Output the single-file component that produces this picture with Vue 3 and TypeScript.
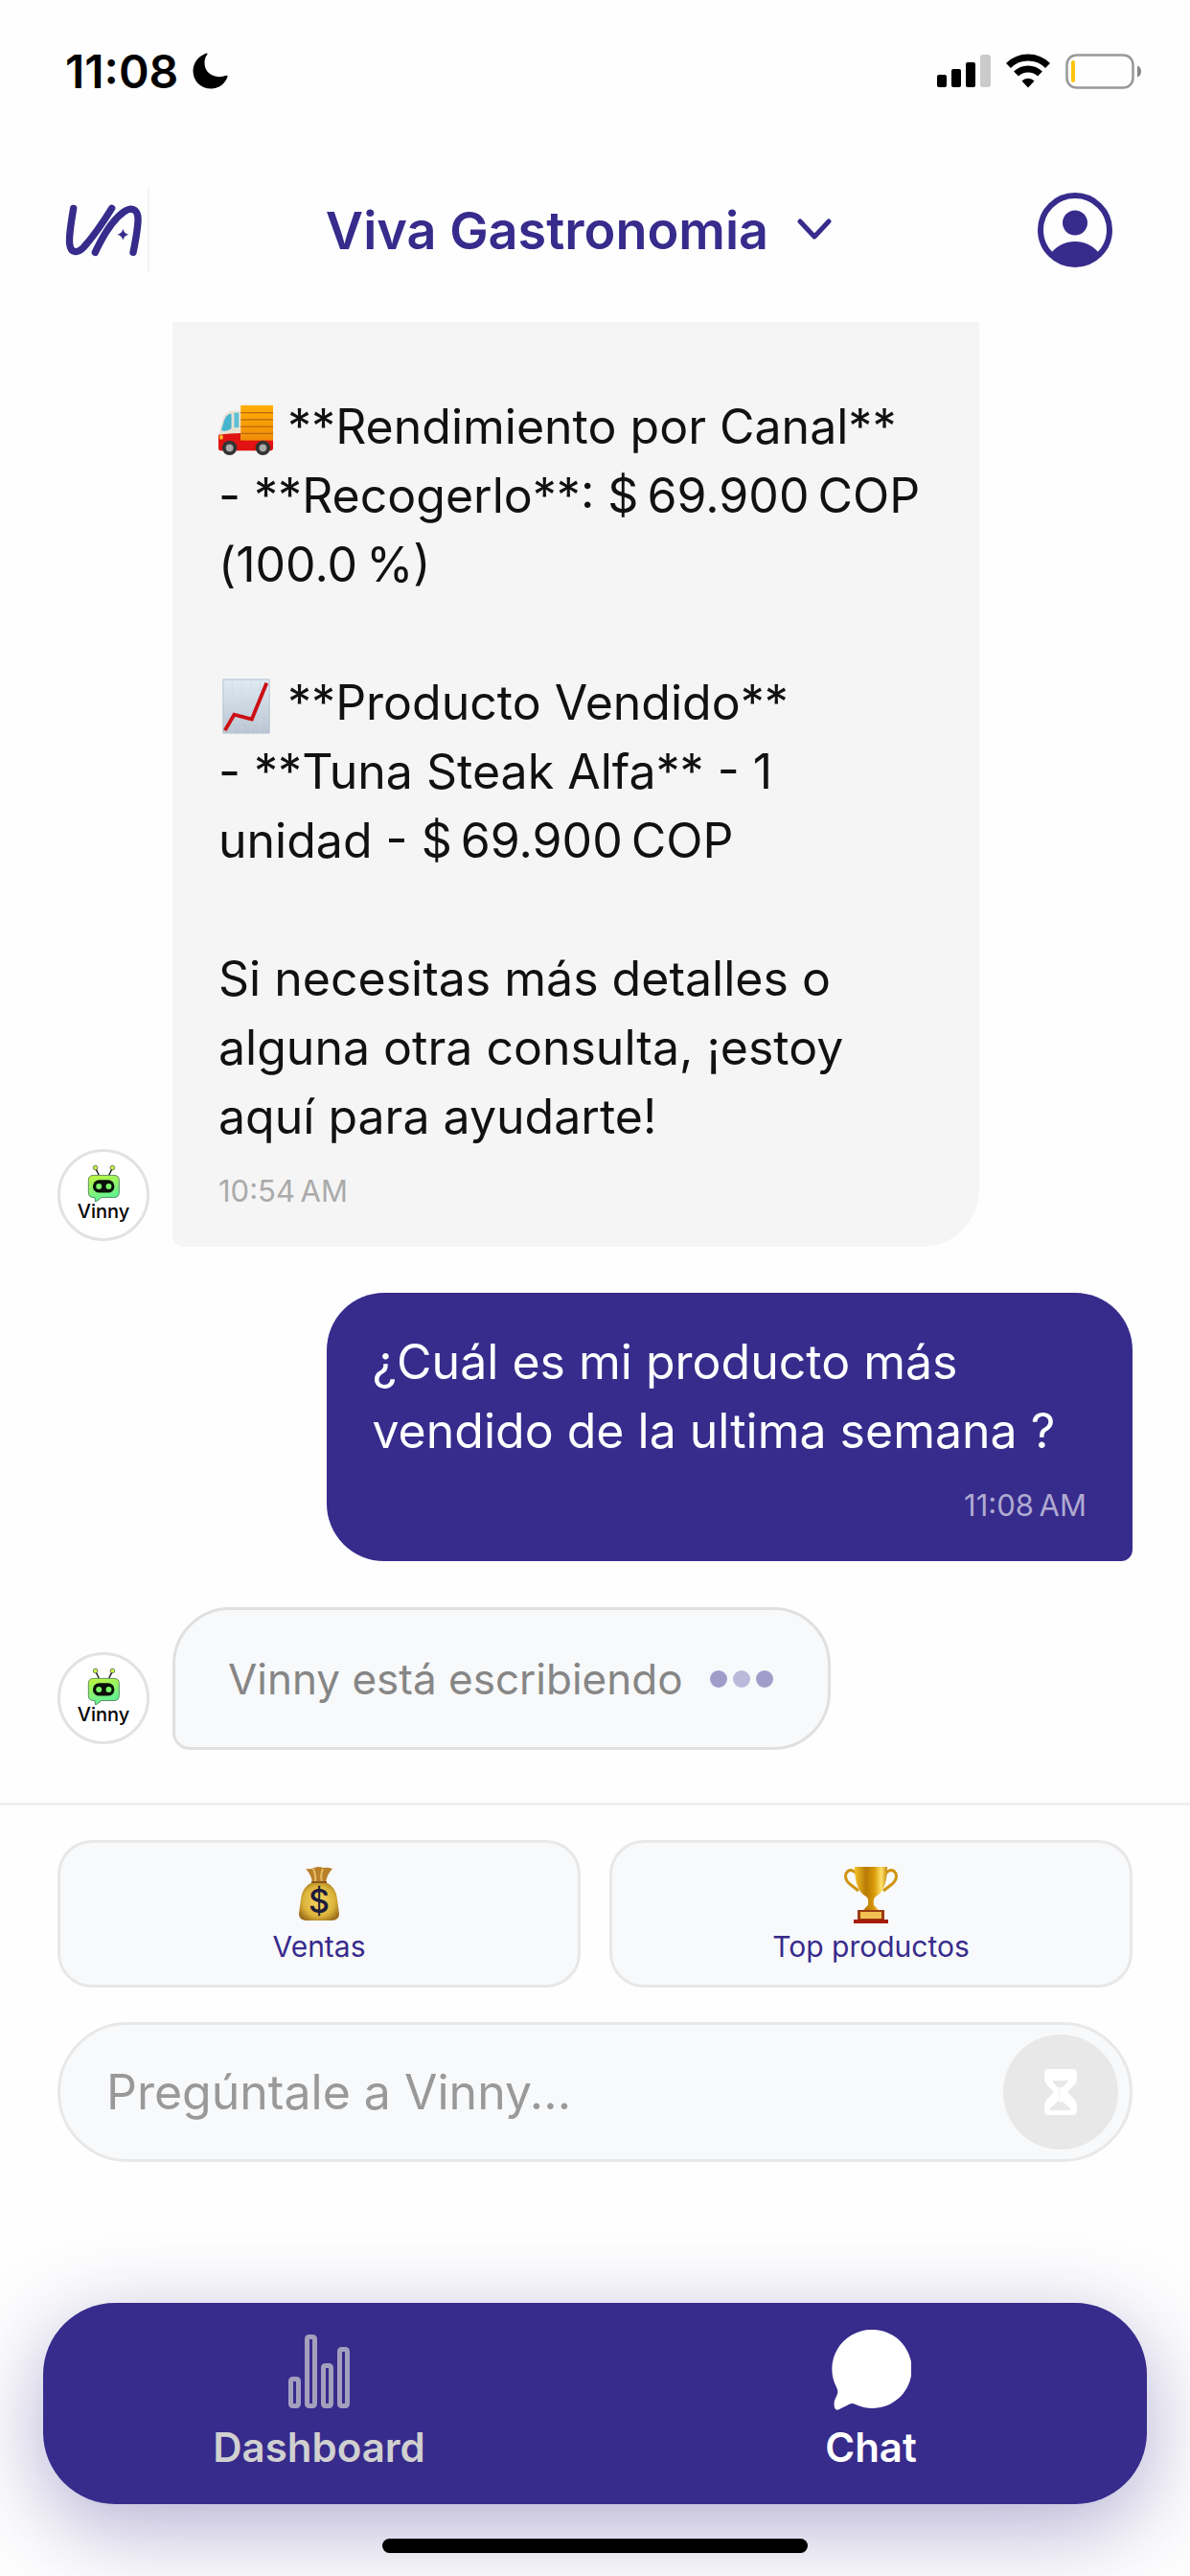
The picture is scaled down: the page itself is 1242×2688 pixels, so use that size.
<script setup lang="ts">
import { ref } from 'vue'

type EmojiName = 'truck' | 'chart'

interface TextLine {
  emoji?: EmojiName
  text: string
}

interface QuickAction {
  id: 'sales' | 'top'
  label: string
}

const reportLines: TextLine[] = [
  { text: '\u00a0' },
  { text: '\u00a0' },
  { emoji: 'truck', text: '**Rendimiento por Canal**' },
  { text: '- **Recogerlo**: $\u200969.900\u2009COP (100.0\u2009%)' },
  { text: '\u00a0' },
  { emoji: 'chart', text: '**Producto Vendido**' },
  { text: '- **Tuna Steak Alfa** - 1 unidad\u00a0- $\u200969.900\u2009COP' },
  { text: '\u00a0' },
  { text: 'Si necesitas más detalles o alguna otra consulta, ¡estoy aquí para ayudarte!' },
]

const quickActions: QuickAction[] = [
  { id: 'sales', label: 'Ventas' },
  { id: 'top', label: 'Top productos' },
]

const draft = ref('')
</script>

<template>
  <div class="app">
    <svg class="defs" width="0" height="0" aria-hidden="true">
      <defs>
        <linearGradient id="bot-green" x1="0" y1="0" x2="0.3" y2="1">
          <stop offset="0" stop-color="#c3f53c" />
          <stop offset="1" stop-color="#5cf29a" />
        </linearGradient>
        <linearGradient id="cargo" x1="0" y1="0" x2="0" y2="1">
          <stop offset="0" stop-color="#ffae00" />
          <stop offset="1" stop-color="#f08c0a" />
        </linearGradient>
        <linearGradient id="paper" x1="0" y1="0" x2="0" y2="1">
          <stop offset="0" stop-color="#dfeaf3" />
          <stop offset="1" stop-color="#b9c5d1" />
        </linearGradient>
        <radialGradient id="sack" cx="0.5" cy="0.5" r="0.6">
          <stop offset="0" stop-color="#f3d765" />
          <stop offset="0.65" stop-color="#dcb43a" />
          <stop offset="1" stop-color="#9a6a1c" />
        </radialGradient>
        <linearGradient id="gold" x1="0" y1="0" x2="1" y2="0">
          <stop offset="0" stop-color="#f5c126" />
          <stop offset="0.35" stop-color="#b87a05" />
          <stop offset="0.6" stop-color="#d99a07" />
          <stop offset="0.82" stop-color="#ffe16a" />
          <stop offset="1" stop-color="#c48a0c" />
        </linearGradient>
        <symbol id="bot" viewBox="118 70 112 120" overflow="visible">
          <path d="M158 106 149 88M190 106 199 88" stroke="#111" stroke-width="4" />
          <circle cx="147" cy="83" r="7" fill="#c3f53c" stroke="#444" stroke-width="2" />
          <circle cx="201" cy="83" r="7" fill="#c3f53c" stroke="#444" stroke-width="2" />
          <path d="M141 107h65q16 0 16 16v38q0 16-16 16h-40l-19 15-2-15h-4q-16 0-16-16v-38q0-16 16-16Z" fill="url(#bot-green)" stroke="#2a5a34" stroke-width="2" />
          <rect x="139" y="122" width="68" height="40" rx="20" fill="#0a0f0a" />
          <circle cx="158" cy="142" r="9" fill="#7df56a" />
          <circle cx="189" cy="142" r="9" fill="#7df56a" />
        </symbol>
      </defs>
    </svg>

    <div class="status">
      <div class="status-group">
        <span class="clock">11:08</span>
        <svg width="37" height="38" viewBox="0 0 37 38" aria-hidden="true">
          <path d="M14.500.5C7 3 .5 10 .5 19 .5 30 9 37.500 19.500 37.500c8 0 14.500-5 17-12.500.3-1-.6-1.600-1.500-1.200C24 28 12 22 12.500 10c.1-3 1-6 2.800-8.200.5-.8 0-1.600-.8-1.300Z" />
        </svg>
      </div>
      <div class="status-group icons">
        <svg width="56" height="34" viewBox="0 0 56 34" aria-hidden="true">
          <rect y="21" width="10" height="13" rx="2" />
          <rect x="15" y="15" width="10" height="19" rx="2" />
          <rect x="30" y="8" width="10" height="26" rx="2" />
          <rect x="45" width="11" height="34" rx="3" fill="#cbcbcb" />
        </svg>
        <svg width="48" height="36" viewBox="0 0 48 36" aria-hidden="true">
          <path d="M3.500 12.500a29 29 0 0 1 41 0M11.500 21a18 18 0 0 1 25 0" fill="none" stroke="#000" stroke-width="7" />
          <path d="M24 35.500 17.500 28.500a9 9 0 0 1 13 0Z" />
        </svg>
        <svg width="80" height="37" viewBox="0 0 80 37" aria-hidden="true">
          <rect x="1.500" y="1.500" width="69" height="34" rx="10" fill="none" stroke="#989898" stroke-width="2.500" />
          <rect x="6" y="7" width="4" height="23" rx="2" fill="#ffc40c" />
          <path d="M75 12.500q4 1.500 4 6t-4 6Z" fill="#888" />
        </svg>
      </div>
    </div>

    <header class="header">
      <div class="logo">
        <svg width="80" height="55" viewBox="54 75 240 165" role="img" aria-label="VA">
          <g fill="none" stroke="#372b8c" stroke-width="22" stroke-linecap="round">
            <path d="M80 88C72 140 65 172 68 200c3 28 24 31 44 10 34-38 62-80 88-122" />
            <path d="M148 226c26-56 60-106 90-127 28-19 46-5 44 29-2 36-9 68-15 98" />
          </g>
          <path d="M235 152q3 15 18 18-15 3-18 18-3-15-18-18 15-3 18-18Z" fill="#372b8c" />
        </svg>
      </div>
      <button class="store" type="button">
        Viva Gastronomia
        <svg width="36" height="24" viewBox="0 0 36 24" aria-hidden="true">
          <path d="M3 3 18 19 33 3" fill="none" stroke="#372b8c" stroke-width="5" stroke-linecap="round" stroke-linejoin="round" />
        </svg>
      </button>
      <button class="profile" type="button" aria-label="Perfil">
        <svg width="78" height="78" viewBox="0 0 78 78" aria-hidden="true">
          <circle cx="39" cy="39" r="36" fill="none" stroke="#372b8c" stroke-width="6" />
          <circle cx="39" cy="31.500" r="13" fill="#372b8c" />
          <path d="M14 63q10-12 25-12t25 12q-10 13-25 13T14 63Z" fill="#372b8c" />
        </svg>
      </button>
    </header>

    <main class="chat">
      <div class="row">
        <div class="avatar">
          <svg width="37" height="40" aria-hidden="true"><use href="#bot" /></svg>
          <span>Vinny</span>
        </div>
        <article class="bubble bot">
          <p v-for="(line, i) in reportLines" :key="i">
            <svg v-if="line.emoji === 'truck'" class="emoji" viewBox="0 0 60 60" role="img" aria-label="Camión">
              <path d="M1 46V33L4 20q2-9 9-11h11v37Z" fill="#e9e2d2" />
              <path d="M3 30 6 20q2-7 8-8v16q-5 4-11 2Z" fill="#46b4cf" />
              <path d="M17 11h5v16h-5Z" fill="#5cc0d6" />
              <path d="M0 35q12-2 24-2v7h35v9q0 3-3 3H2q-2 0-2-3Z" fill="#e01212" />
              <rect x="24" y="3" width="35" height="38" fill="url(#cargo)" />
              <path d="M24 11h35M24 18.500h35M24 26h35M24 33.500h35" stroke="#b8690a" stroke-width="1.500" />
              <rect x="1" y="35" width="4" height="5" rx="2" fill="#ffb72b" />
              <circle cx="12" cy="49" r="8" fill="#333" />
              <circle cx="12" cy="49" r="4" fill="#aaa" />
              <circle cx="48" cy="49" r="8" fill="#333" />
              <circle cx="48" cy="49" r="4" fill="#aaa" />
            </svg>
            <svg v-else-if="line.emoji === 'chart'" class="emoji" viewBox="0 0 60 60" role="img" aria-label="Gráfico">
              <rect x="5" y="1" width="50" height="58" fill="url(#paper)" stroke="#b5c2ce" />
              <path d="M15 1v58M25 1v58M35 1v58M45 1v58M5 12h50M5 24h50M5 36h50M5 48h50" stroke="#cbd8e3" stroke-width="0.5" />
              <path d="M7 56 17 39 36 44 52 5" fill="none" stroke="#cc0f14" stroke-width="4" />
            </svg>
            {{ line.text }}
          </p>
          <time>10:54&#8201;AM</time>
        </article>
      </div>

      <article class="bubble user">
        <p>¿Cuál es mi producto más vendido de la ultima semana&nbsp;?</p>
        <time>11:08&#8201;AM</time>
      </article>

      <div class="row">
        <div class="avatar">
          <svg width="37" height="40" aria-hidden="true"><use href="#bot" /></svg>
          <span>Vinny</span>
        </div>
        <div class="typing" role="status">
          Vinny está escribiendo
          <span class="dots"><i></i><i></i><i></i></span>
        </div>
      </div>
    </main>

    <section class="composer">
      <div class="actions">
        <button v-for="action in quickActions" :key="action.id" class="action" type="button">
          <svg v-if="action.id === 'sales'" width="60" height="60" viewBox="0 0 60 60" aria-hidden="true">
            <path d="M16 3q5 1 9-1 5-2 9 0 5-1 10 1-6 6-7 15H23Q22 9 16 3Z" fill="#b9802a" />
            <path d="M24 3q3 7 2 14M34 3q-3 7-1 14" stroke="#e6bc62" stroke-width="2" fill="none" />
            <path d="M23 17h14q11 5 12 18l2 15q0 6-7 7H16q-7-1-7-7l2-15q1-13 12-18Z" fill="url(#sack)" />
            <path d="M22 17h16" stroke="#8a591b" stroke-width="2" />
            <text x="30" y="49" text-anchor="middle" class="coin">$</text>
          </svg>
          <svg v-else width="60" height="60" viewBox="0 0 60 60" aria-hidden="true">
            <path d="M15 8Q8 1 4 8q-2 6 4 11l9 7M45 8q7-7 11 0 2 6-4 11l-9 7" fill="none" stroke="#cf940e" stroke-width="3" />
            <path d="M13 1h34q0 25-12 31-3 2-2 9l5 5v2H22v-2l5-5q1-7-2-9Q13 26 13 1Z" fill="url(#gold)" />
            <path d="M16 46h28v10H16Z" fill="#9c3b12" />
            <path d="M19 48h22v7H19Z" fill="#f0c152" />
            <path d="M12 56h36v4H12Z" fill="#a51d08" />
          </svg>
          {{ action.label }}
        </button>
      </div>
      <form class="ask" @submit.prevent>
        <input v-model="draft" type="text" placeholder="Pregúntale a Vinny..." aria-label="Pregúntale a Vinny" />
        <button type="submit" aria-label="Enviar">
          <svg width="34" height="48" viewBox="0 0 34 48" aria-hidden="true">
            <path d="M5 0h24q5 0 5 5v5q0 4-3 7l-7 7 7 7q3 3 3 7v5q0 5-5 5H5q-5 0-5-5v-5q0-4 3-7l7-7-7-7q-3-3-3-7V5q0-5 5-5Z" fill="#fff" />
            <path d="M9 12h16l-1 2-6 6v13l9 8v2H6v-2l9-8V20l-6-6Z" fill="#e8e8e8" />
            <path d="M17 19v16" stroke="#fff" stroke-width="3" />
          </svg>
        </button>
      </form>
    </section>

    <nav class="tabs">
      <a class="tab" href="#dashboard">
        <svg width="84" height="84" viewBox="0 0 84 84" fill="none" stroke="#a49fbd" stroke-width="5" aria-hidden="true">
          <rect x="12.500" y="51.500" width="8" height="28" rx="2" />
          <rect x="29.500" y="7.500" width="8" height="72" rx="2" />
          <rect x="46.500" y="37.500" width="8" height="42" rx="2" />
          <rect x="63.500" y="20.500" width="8" height="59" rx="2" />
        </svg>
        Dashboard
      </a>
      <a class="tab active" href="#chat" aria-current="page">
        <svg width="84" height="84" viewBox="0 0 84 84" aria-hidden="true">
          <path d="M42 0a41 41 0 1 1-16 78q-4-2-7 0L9 83q-4 2-5-2-1-3 0-7l3-7q1-3-1-7A41 41 0 0 1 42 0Z" fill="#fff" />
        </svg>
        Chat
      </a>
    </nav>
    <div class="home-bar"></div>
  </div>
</template>

<style>
body {
  margin: 0;
  background: #fefefe;
}
</style>

<style scoped>
.app {
  display: flex;
  flex-direction: column;
  height: 100vh;
  overflow: hidden;
  background: #fefefe;
  color: #111;
  font-family: Inter, "Liberation Sans", sans-serif;
}

svg {
  display: block;
  flex: none;
}

.defs {
  position: absolute;
}

button,
input {
  font: inherit;
  border: 0;
  background: none;
  padding: 0;
}

p {
  margin: 0;
}

.status {
  display: flex;
  align-items: center;
  justify-content: space-between;
  height: 148px;
  padding: 0 50px 0 68px;
  color: #000;
}

.status-group {
  display: flex;
  align-items: center;
  gap: 15px;
}

.clock {
  font-size: 48px;
  font-weight: 600;
}

.header {
  display: flex;
  align-items: center;
  justify-content: space-between;
  height: 184px;
  padding: 0 60px 4px;
}

.logo {
  display: flex;
  align-items: center;
  box-sizing: border-box;
  width: 96px;
  height: 90px;
  padding-left: 8px;
  border-right: 2px solid #f4f4f4;
}

.store {
  display: flex;
  align-items: center;
  gap: 30px;
  padding-right: 10px;
  color: #372b8c;
  font-size: 54px;
  font-weight: 600;
}

.profile {
  display: flex;
  justify-content: center;
  width: 120px;
}

.chat {
  display: flex;
  flex: 1 1 0;
  flex-direction: column;
  justify-content: flex-end;
  gap: 48px;
  min-height: 0;
  overflow: hidden;
  padding: 0 60px 55px;
}

.row {
  display: flex;
  align-items: flex-end;
  gap: 24px;
}

.avatar {
  display: flex;
  flex: none;
  flex-direction: column;
  align-items: center;
  box-sizing: border-box;
  width: 96px;
  height: 96px;
  margin-bottom: 6px;
  padding-top: 12px;
  border: 3px solid #e2e2e2;
  border-radius: 50%;
  background: #fff;
  color: #000;
  font-size: 20px;
  font-weight: 500;
  line-height: 20px;
}

.bubble {
  box-sizing: border-box;
  width: 75%;
  padding: 36px 48px 34px;
  font-size: 50px;
  line-height: 72px;
}

.bubble.bot {
  border-radius: 60px 60px 60px 12px;
  background: #f5f5f5;
}

.bubble.user {
  align-self: flex-end;
  border-radius: 60px 60px 12px 60px;
  background: #372b8c;
  color: #fff;
}

.bubble time {
  display: block;
  margin-top: 18px;
  color: #aaa;
  font-size: 31px;
  line-height: 48px;
}

.bubble.user time {
  color: #afaad1;
  text-align: right;
}

.emoji {
  display: inline-block;
  width: 58px;
  height: 58px;
  vertical-align: -15px;
}

.typing {
  display: flex;
  align-items: center;
  gap: 28px;
  box-sizing: border-box;
  min-height: 149px;
  padding: 0 57px 0 55px;
  border: 3px solid #e0e0e0;
  border-radius: 60px 60px 60px 18px;
  background: #f8f9fb;
  color: #868686;
  font-size: 44px;
}

.dots {
  display: flex;
  gap: 6px;
}

.dots i {
  width: 18px;
  height: 18px;
  border-radius: 50%;
  background: #a29ccb;
}

.dots i:nth-child(2) {
  background: #bdb9da;
}

.composer {
  display: flex;
  flex-direction: column;
  gap: 36px;
  padding: 36px 60px 0;
  border-top: 3px solid #efefef;
}

.actions {
  display: grid;
  grid-template-columns: 1fr 1fr;
  gap: 30px;
}

.action {
  display: flex;
  flex-direction: column;
  align-items: center;
  gap: 6px;
  height: 154px;
  padding-top: 24px;
  border: 3px solid #e8e8e8;
  border-radius: 36px;
  background: #f8f9fb;
  color: #372b8c;
  font-size: 30px;
  line-height: 36px;
}

.coin {
  fill: #1d1a3a;
  font-size: 34px;
  font-weight: 500;
}

.ask {
  display: flex;
  align-items: center;
  box-sizing: border-box;
  height: 146px;
  padding: 0 12px 0 48px;
  border: 3px solid #e8e8e8;
  border-radius: 73px;
  background: #f8f9fb;
}

.ask input {
  flex: 1;
  min-width: 0;
  outline: 0;
  color: #111;
  font-size: 50px;
}

.ask input::placeholder {
  color: #999;
  opacity: 1;
}

.ask button {
  display: flex;
  align-items: center;
  justify-content: center;
  width: 120px;
  height: 120px;
  border-radius: 50%;
  background: #e8e8e8;
}

.tabs {
  display: grid;
  grid-template-columns: 1fr 1fr;
  height: 210px;
  margin: 147px 45px 36px;
  border-radius: 75px;
  background: #372b8c;
  box-shadow: 0 24px 90px rgba(55, 43, 140, 0.38);
}

.tab {
  display: flex;
  flex-direction: column;
  align-items: center;
  gap: 12px;
  padding-top: 28px;
  color: #d0d0d0;
  font-size: 42px;
  font-weight: 600;
  line-height: 54px;
  text-decoration: none;
}

.tab.active {
  color: #fff;
}

.home-bar {
  z-index: 1;
  align-self: center;
  width: 444px;
  height: 15px;
  margin-bottom: 24px;
  border-radius: 8px;
  background: #000;
}
</style>
